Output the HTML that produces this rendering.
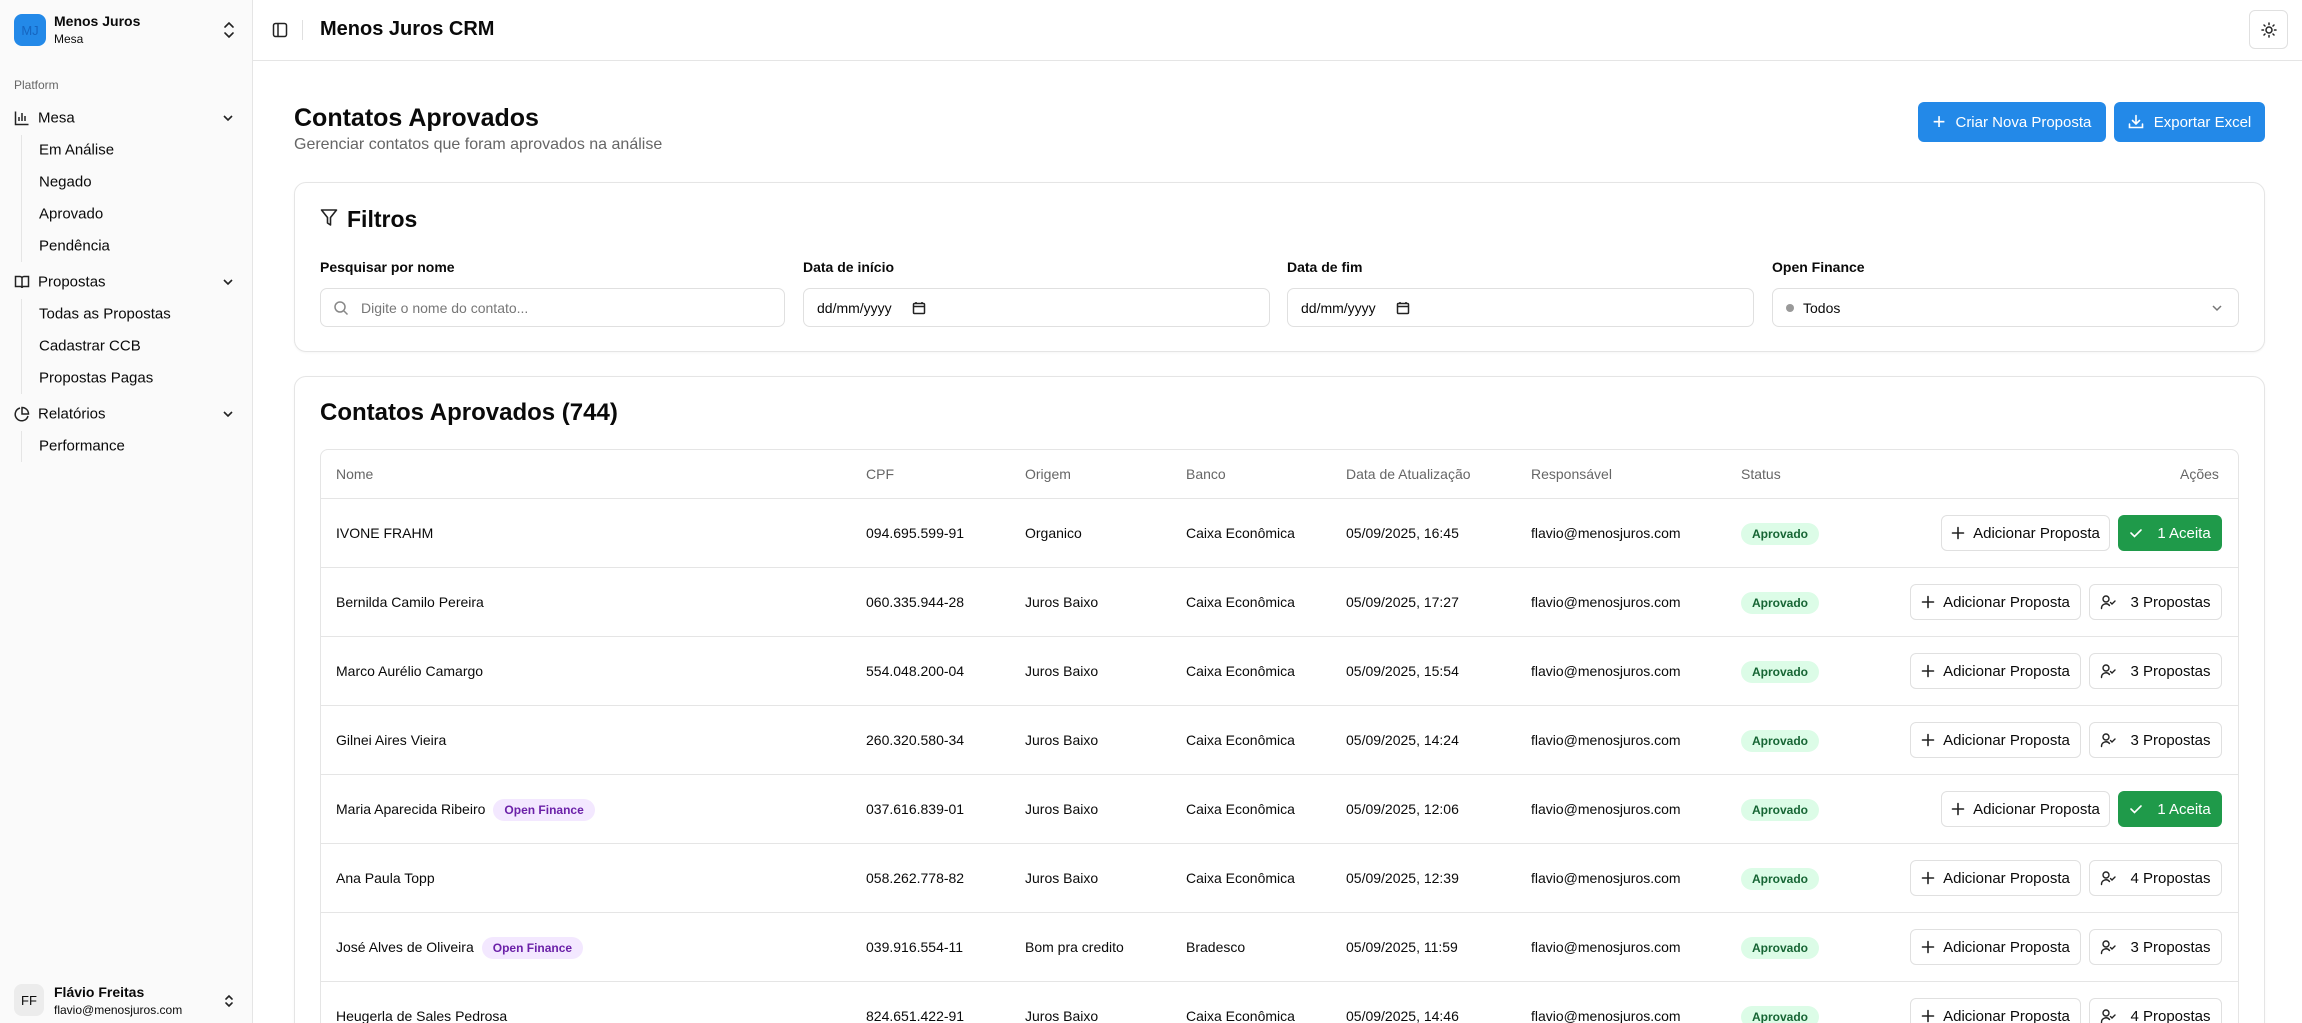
<!DOCTYPE html>
<html style="width:2302px;height:1023px;overflow:hidden"><head><meta charset="utf-8"><style>
*{box-sizing:border-box;margin:0;padding:0}
body{width:2302px;height:1023px;overflow:hidden;font-family:"Liberation Sans",sans-serif;color:#0a0a0a;background:#fff;position:relative}
.abs{position:absolute}
.sb{left:0;top:0;width:253px;height:1023px;background:#fafafa;border-right:1px solid #e5e5e5}
.sb .it{position:absolute;left:38px;font-size:15px;transform:translateY(-50%)}
.sb .sub{position:absolute;left:39px;font-size:15px;transform:translateY(-50%)}
.sb .ic{position:absolute;left:14px;transform:translateY(-50%)}
.sb .chev{position:absolute;left:221px;transform:translateY(-50%)}
.vl{position:absolute;left:21px;width:1px;background:#e5e5e5}
.card{border:1px solid #e5e5e5;border-radius:12px;background:#fff;box-shadow:0 1px 2px rgba(0,0,0,.04)}
.lbl{font-size:14px;font-weight:bold;color:#0a0a0a}
.inp{height:39px;border:1px solid #e0e0e0;border-radius:7px;background:#fff;font-size:14px;display:flex;align-items:center}
.btnb{background:#2389e8;color:#fff;border-radius:6px;font-size:15px;display:flex;align-items:center;justify-content:center;gap:10px}
.th{position:absolute;top:474px;font-size:14px;color:#666;transform:translateY(-50%)}
.row{position:absolute;left:320px;width:1919px;height:69px;border-top:1px solid #e5e5e5}
.c{position:absolute;top:50%;transform:translateY(-50%);font-size:14px;white-space:nowrap}
.badge{background:#dcfce7;color:#166534;font-size:12px;font-weight:bold;border-radius:11px;padding:4px 11px}
.of{background:#f3e8ff;color:#6b21a8;font-size:12px;font-weight:bold;border-radius:11px;padding:4px 11px;margin-left:8px}
.bo{position:absolute;top:50%;transform:translateY(-50%);height:36px;border:1px solid #e0e0e0;border-radius:6px;background:#fff;font-size:15px;display:flex;align-items:center;justify-content:center;gap:8px}
.bg{position:absolute;top:50%;transform:translateY(-50%);height:36px;border-radius:6px;background:#1f9a4a;color:#fff;font-size:15px;display:flex;align-items:center;justify-content:center;gap:14px}
#clip{position:absolute;left:0;top:0;width:2302px;height:1023px;overflow:hidden}
</style></head><body><div id="clip">
<div class="abs sb">
  <div class="abs" style="left:14px;top:14px;width:32px;height:32px;border-radius:8px;background:#2389e8;color:#1565c0;font-size:13px;display:flex;align-items:center;justify-content:center">MJ</div>
  <div class="abs" style="left:54px;top:13px;font-size:14px;font-weight:bold">Menos Juros</div>
  <div class="abs" style="left:54px;top:32px;font-size:12px">Mesa</div>
  <svg class="abs" style="left:222px;top:21px" width="14" height="18" viewBox="0 0 14 18" fill="none" stroke="#222" stroke-width="1.6" stroke-linecap="round"><path d="M3 6l4-4 4 4M3 12l4 4 4-4"/></svg>
  <div class="abs" style="left:14px;top:78px;font-size:12px;color:#666">Platform</div>

  <svg class="ic" style="top:118px" width="16" height="16" viewBox="0 0 16 16" fill="none" stroke="#222" stroke-width="1.5"><path d="M1.5 1.5v13h13M5 11V7M8 11V3M11 11V6"/></svg>
  <div class="it" style="top:118px">Mesa</div>
  <svg class="chev" style="top:118px" width="14" height="14" viewBox="0 0 14 14" fill="none" stroke="#222" stroke-width="1.6"><path d="M3 5l4 4 4-4"/></svg>
  <div class="vl" style="top:135px;height:127px"></div>
  <div class="sub" style="top:150px">Em Análise</div>
  <div class="sub" style="top:182px">Negado</div>
  <div class="sub" style="top:214px">Aprovado</div>
  <div class="sub" style="top:246px">Pendência</div>

  <svg class="ic" style="top:282px" width="16" height="16" viewBox="0 0 16 16" fill="none" stroke="#222" stroke-width="1.5"><path d="M8 3v11M1.5 2.5h4.5a2 2 0 0 1 2 2 2 2 0 0 1 2-2h4.5v10h-5a1.5 1.5 0 0 0-1.5 1.5 1.5 1.5 0 0 0-1.5-1.5h-5z"/></svg>
  <div class="it" style="top:282px">Propostas</div>
  <svg class="chev" style="top:282px" width="14" height="14" viewBox="0 0 14 14" fill="none" stroke="#222" stroke-width="1.6"><path d="M3 5l4 4 4-4"/></svg>
  <div class="vl" style="top:299px;height:95px"></div>
  <div class="sub" style="top:314px">Todas as Propostas</div>
  <div class="sub" style="top:346px">Cadastrar CCB</div>
  <div class="sub" style="top:378px">Propostas Pagas</div>

  <svg class="ic" style="top:414px" width="16" height="16" viewBox="0 0 16 16" fill="none" stroke="#222" stroke-width="1.5"><path d="M14 10A6.5 6.5 0 1 1 6 2M14.5 8A6.5 6.5 0 0 0 8 1.5V8z"/></svg>
  <div class="it" style="top:414px">Relatórios</div>
  <svg class="chev" style="top:414px" width="14" height="14" viewBox="0 0 14 14" fill="none" stroke="#222" stroke-width="1.6"><path d="M3 5l4 4 4-4"/></svg>
  <div class="vl" style="top:431px;height:31px"></div>
  <div class="sub" style="top:446px">Performance</div>

  <div class="abs" style="left:14px;top:984px;width:30px;height:32px;border-radius:8px;background:#ececec;font-size:13px;display:flex;align-items:center;justify-content:center">FF</div>
  <div class="abs" style="left:54px;top:984px;font-size:14px;font-weight:bold">Flávio Freitas</div>
  <div class="abs" style="left:54px;top:1003px;font-size:12px">flavio@menosjuros.com</div>
  <svg class="abs" style="left:222px;top:992px" width="14" height="18" viewBox="0 0 14 18" fill="none" stroke="#222" stroke-width="1.6" stroke-linecap="round"><path d="M4 7l3-3 3 3M4 11l3 3 3-3"/></svg>
</div>

<div class="abs" style="left:253px;top:0;width:2049px;height:61px;border-bottom:1px solid #e5e5e5"></div>
<svg class="abs" style="left:272px;top:22px" width="16" height="16" viewBox="0 0 16 16" fill="none" stroke="#222" stroke-width="1.5"><rect x="1.5" y="1.5" width="13" height="13" rx="2"/><path d="M6 1.5v13"/></svg>
<div class="abs" style="left:302px;top:20px;width:1px;height:20px;background:#e0e0e0"></div>
<div class="abs" style="left:320px;top:18px;font-size:20px;font-weight:bold">Menos Juros CRM</div>
<div class="abs" style="left:2249px;top:10px;width:39px;height:39px;border:1px solid #e0e0e0;border-radius:6px;display:flex;align-items:center;justify-content:center">
<svg width="16" height="16" viewBox="0 0 16 16" fill="none" stroke="#222" stroke-width="1.5" stroke-linecap="round"><circle cx="8" cy="8" r="3"/><path d="M8 1v1.5M8 13.5V15M1 8h1.5M13.5 8H15M3 3l1 1M12 12l1 1M3 13l1-1M12 4l1-1"/></svg></div>

<div class="abs" style="left:294px;top:104px;font-size:25px;font-weight:bold">Contatos Aprovados</div>
<div class="abs" style="left:294px;top:136px;font-size:16px;color:#666">Gerenciar contatos que foram aprovados na análise</div>
<div class="abs btnb" style="left:1918px;top:102px;width:188px;height:40px"><span style="font-size:22px;font-weight:300;line-height:1">+</span>Criar Nova Proposta</div>
<div class="abs btnb" style="left:2114px;top:102px;width:151px;height:40px"><svg width="16" height="16" viewBox="0 0 16 16" fill="none" stroke="#fff" stroke-width="1.6" stroke-linecap="round"><path d="M8 1.5v8M4.5 6.5L8 10l3.5-3.5M1.5 10v3.5h13V10"/></svg>Exportar Excel</div>

<div class="abs card" style="left:294px;top:182px;width:1971px;height:170px"></div>
<svg class="abs" style="left:320px;top:208px" width="18" height="20" viewBox="0 0 18 20" fill="none" stroke="#222" stroke-width="1.6" stroke-linejoin="round"><path d="M1.5 2h15l-6 7.5V17l-3-2V9.5z"/></svg>
<div class="abs" style="left:347px;top:206px;font-size:23px;font-weight:bold">Filtros</div>
<div class="abs lbl" style="left:320px;top:259px">Pesquisar por nome</div>
<div class="abs lbl" style="left:803px;top:259px">Data de início</div>
<div class="abs lbl" style="left:1287px;top:259px">Data de fim</div>
<div class="abs lbl" style="left:1772px;top:259px">Open Finance</div>
<div class="abs inp" style="left:320px;top:288px;width:465px"><svg style="margin-left:12px" width="16" height="16" viewBox="0 0 16 16" fill="none" stroke="#888" stroke-width="1.5"><circle cx="7" cy="7" r="5"/><path d="M11 11l3.5 3.5"/></svg><span style="margin-left:12px;color:#777">Digite o nome do contato...</span></div>
<div class="abs inp" style="left:803px;top:288px;width:467px"><span style="margin-left:13px">dd/mm/yyyy</span><svg style="margin-left:20px" width="14" height="14" viewBox="0 0 14 14" fill="none" stroke="#222" stroke-width="1.5"><rect x="1.5" y="2.5" width="11" height="10" rx="1"/><path d="M1.5 5.5h11M4 1v2M10 1v2"/></svg></div>
<div class="abs inp" style="left:1287px;top:288px;width:467px"><span style="margin-left:13px">dd/mm/yyyy</span><svg style="margin-left:20px" width="14" height="14" viewBox="0 0 14 14" fill="none" stroke="#222" stroke-width="1.5"><rect x="1.5" y="2.5" width="11" height="10" rx="1"/><path d="M1.5 5.5h11M4 1v2M10 1v2"/></svg></div>
<div class="abs inp" style="left:1772px;top:288px;width:467px"><span style="margin-left:13px;width:8px;height:8px;border-radius:50%;background:#999;display:inline-block"></span><span style="margin-left:9px">Todos</span><svg style="margin-left:auto;margin-right:14px" width="14" height="14" viewBox="0 0 14 14" fill="none" stroke="#777" stroke-width="1.5"><path d="M3 5l4 4 4-4"/></svg></div>

<div class="abs card" style="left:294px;top:376px;width:1971px;height:700px"></div>
<div class="abs" style="left:320px;top:399px;font-size:24px;font-weight:bold">Contatos Aprovados (744)</div>
<div class="abs" style="left:320px;top:449px;width:1919px;height:620px;border:1px solid #e5e5e5;border-radius:8px"></div>
<div class="th" style="left:336px">Nome</div>
<div class="th" style="left:866px">CPF</div>
<div class="th" style="left:1025px">Origem</div>
<div class="th" style="left:1186px">Banco</div>
<div class="th" style="left:1346px">Data de Atualização</div>
<div class="th" style="left:1531px">Responsável</div>
<div class="th" style="left:1741px">Status</div>
<div class="th" style="left:2180px">Ações</div>

<div id="rows"></div>
</div>
<script>
const P='<svg width="14" height="14" viewBox="0 0 14 14" fill="none" stroke="#222" stroke-width="1.6" stroke-linecap="round"><path d="M7 1.5v11M1.5 7h11"/></svg>';
const U='<svg width="16" height="16" viewBox="0 0 16 16" fill="none" stroke="#222" stroke-width="1.4" stroke-linecap="round"><circle cx="6" cy="5" r="3"/><path d="M1.5 14.5a4.5 4.5 0 0 1 8-3M10.5 8.5l1.5 1.5 3-3"/></svg>';
const C='<svg width="14" height="14" viewBox="0 0 14 14" fill="none" stroke="#fff" stroke-width="1.6" stroke-linecap="round"><path d="M2 7l3.5 3.5L12 4"/></svg>';
const d=[["IVONE FRAHM",0,"094.695.599-91","Organico","Caixa Econômica","05/09/2025, 16:45","a"],
["Bernilda Camilo Pereira",0,"060.335.944-28","Juros Baixo","Caixa Econômica","05/09/2025, 17:27","3"],
["Marco Aurélio Camargo",0,"554.048.200-04","Juros Baixo","Caixa Econômica","05/09/2025, 15:54","3"],
["Gilnei Aires Vieira",0,"260.320.580-34","Juros Baixo","Caixa Econômica","05/09/2025, 14:24","3"],
["Maria Aparecida Ribeiro",1,"037.616.839-01","Juros Baixo","Caixa Econômica","05/09/2025, 12:06","a"],
["Ana Paula Topp",0,"058.262.778-82","Juros Baixo","Caixa Econômica","05/09/2025, 12:39","4"],
["José Alves de Oliveira",1,"039.916.554-11","Bom pra credito","Bradesco","05/09/2025, 11:59","3"],
["Heugerla de Sales Pedrosa",0,"824.651.422-91","Juros Baixo","Caixa Econômica","05/09/2025, 14:46","4"]];
let h='';
d.forEach((r,i)=>{
 const top=498+i*69;
 let act;
 if(r[6]=='a') act=`<div class="bo" style="left:1621px;width:169px">${P}Adicionar Proposta</div><div class="bg" style="left:1798px;width:104px">${C}1 Aceita</div>`;
 else act=`<div class="bo" style="left:1590px;width:171px">${P}Adicionar Proposta</div><div class="bo" style="left:1769px;width:133px;gap:14px">${U}${r[6]} Propostas</div>`;
 h+=`<div class="row" style="top:${top}px"><div class="c" style="left:16px">${r[0]}${r[1]?'<span class="of">Open Finance</span>':''}</div><div class="c" style="left:546px">${r[2]}</div><div class="c" style="left:705px">${r[3]}</div><div class="c" style="left:866px">${r[4]}</div><div class="c" style="left:1026px">${r[5]}</div><div class="c" style="left:1211px">flavio@menosjuros.com</div><div class="c" style="left:1421px"><span class="badge">Aprovado</span></div>${act}</div>`;
});
document.getElementById('rows').innerHTML=h;
</script>
</body></html>
